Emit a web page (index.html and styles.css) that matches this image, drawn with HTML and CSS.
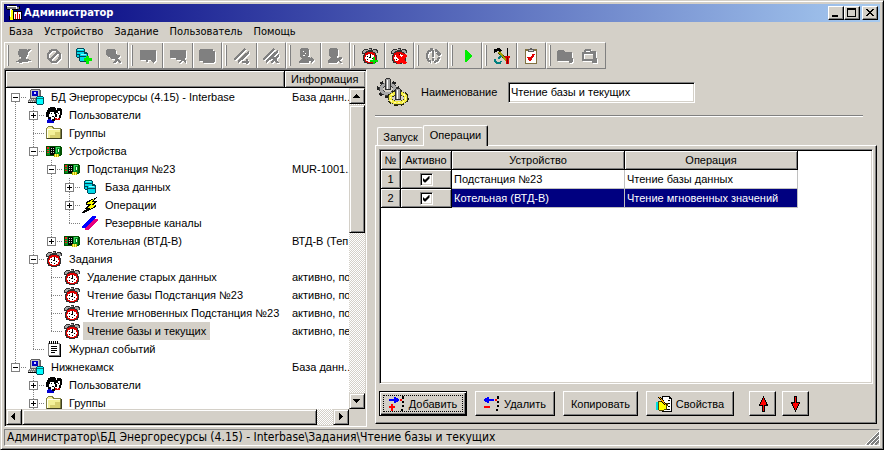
FILE: index.html
```html
<!DOCTYPE html>
<html lang="ru">
<head>
<meta charset="utf-8">
<title>Администратор</title>
<link rel="stylesheet" href="styles.css">
</head>
<body>
<svg class="defs" aria-hidden="true">
  <symbol id="app" viewBox="0 0 16 16">
    <path fill="#fff" d="M1 1h10v4H1z"/><path fill="#808080" d="M1 2h9v2H1zM11 2h2v2h-2z"/><path fill="#000" d="M0 1h1v3H0zM1 4h3v1H1zM6 4h6v1H6zM13 1h1v3h-1zM3 0h7v1H3z"/>
    <path fill="#ff0" d="M4 5h3v10H4z"/><path fill="#fff" d="M4 5h1v7H4z"/><path fill="#000" d="M7 6h9v9H7zM3 11h1v4H3z"/><path fill="#fff" d="M8 7h7v7H8z"/><path fill="#c00" d="M9 9h1v5H9zM11 7h1v7h-1zM13 9h1v5h-1z"/>
  </symbol>
  <symbol id="pc" viewBox="0 0 16 16">
    <path fill="#606060" d="M3 0h9v1h1v8h1v1H2V1h1z"/><path fill="#c8c8c8" d="M3 1h8v8H3z"/><path fill="#808080" d="M11 1h1v8h-1z"/><path fill="#0000c0" d="M4 2h6v5H4z"/><path fill="#d0d0ff" d="M6 3h2v2H6z"/>
    <path fill="#808080" d="M1 10h9v1H1zM0 11h10v2H0z"/><path fill="#e0e0e0" d="M2 10h1v1H2zM4 10h1v1H4zM6 10h1v1H6zM1 12h1v1H1zM3 12h1v1H3zM5 12h1v1H5z"/><path fill="#000" d="M0 13h9v1H0z"/>
    <path fill="#005060" d="M9 7h6v1h1v7h-1v1H9v-1H8V8h1z"/><path fill="#0ff" d="M9 8h6v1H9zM9 10h6v5H9z"/><path fill="#008080" d="M9 9h6v1H9z"/>
  </symbol>
  <symbol id="users" viewBox="0 0 16 16">
    <path fill="#000" d="M4 0h5v1h1v2h1V1h4v1h1v6h-1v3h-2v-1H9v4H6v-2H2v-2H0V5h1V3h1V1h2z"/>
    <path fill="#fff" d="M4 5h4v2h1v3H8v2H5v-2H3V7h1zM12 4h2v4h-1v2h-2V7h-1V6h2z"/>
    <path fill="#000" d="M5 6h1v1H5zM6 9h2v1H6zM12 6h1v1h-1z"/><path fill="#0000d0" d="M2 12h3v1h1v1h2v2H1v-3h1z"/><path fill="#d00000" d="M9 11h2v1h1v-1h2v2H9z"/>
  </symbol>
  <symbol id="folder" viewBox="0 0 16 16">
    <path fill="#808040" d="M2 1h5v1h1v1h7v1h1v10H0V3h1V2h1z"/><path fill="#f4f098" d="M2 2h4v1h1v1h7v9H1V3h1z"/><path fill="#fffff0" d="M1 4h13v1H2v8H1z"/><path fill="#d8d070" d="M4 10h10v3H4zM9 7h5v3H9z"/><path fill="#404020" d="M15 4h1v10H1v-1h14z"/>
  </symbol>
  <symbol id="board" viewBox="0 0 16 16">
    <path fill="#005000" d="M0 3h15v1h1v8h-1v1H0z"/><path fill="#008c20" d="M1 4h13v8H1z"/><path fill="#f02020" d="M1 4h2v2H1zM1 7h2v1H1zM1 9h2v1H1z"/><path fill="#000" d="M4 4h5v8H4z"/><path fill="#c0d8c0" d="M5 5h1v1H5zM7 5h1v1H7zM5 7h1v1H5zM7 7h1v1H7zM5 9h1v1H5zM7 9h1v1H7z"/><path fill="#40d060" d="M10 4h4v1h-4zM10 5h1v5h-1z"/><path fill="#e8ffe8" d="M12 6h1v3h-1z"/><path fill="#c0b000" d="M8 11h5v3H8z"/><path fill="#ffff60" d="M9 11h1v3H9zM11 11h1v3h-1z"/>
  </symbol>
  <symbol id="db" viewBox="0 0 16 16">
    <path fill="#004858" d="M3 1h7v1h1v3h2v1h1v8h-1v1H6v-1H5v-3H3v-1H2V2h1z"/><path fill="#00d8e8" d="M3 2h7v2H3zM3 5h7v2H3zM3 8h2v2H3zM6 7h7v2H6zM6 10h7v4H6z"/><path fill="#80ffff" d="M4 2h5v1H4zM7 7h5v1H7z"/>
  </symbol>
  <symbol id="bolt" viewBox="0 0 16 16">
    <path fill="#000" d="M15 0L4 5v3h3l-4 3v1h2L0 15v1h2l12-6V8h-3l4-3V4h-4l4-3z"/><path fill="#ff0" d="M12 2L5 6v1h5l-5 4h4l-4 3 8-5V8H9l4-3H9z"/>
  </symbol>
  <symbol id="lines" viewBox="0 0 16 16">
    <path fill="#00f" d="M10 1h4v1L3 13H0v-2z"/><path fill="#e6007e" d="M13 4h3v2L6 15H3v-2z"/>
  </symbol>
  <symbol id="clock" viewBox="0 0 16 16">
    <path fill="#303030" d="M2 1h4v1h1V0h3v2h1V1h4v1h1v3h-2v2h1v6h-1v2h-3v1H5v-1H2v-2H1V7h1V6H0V3h1V2h1z"/>
    <path fill="#a8a8a8" d="M2 2h4v1H4v1H3v1H1V3h1zM11 2h3v1h1v2h-2V4h-2zM7 1h2v1H7z"/>
    <path fill="#e00000" d="M5 4h6v1h2v3h1v4h-1v2h-2v1H5v-1H3v-2H2V8h1V5h2z"/><path fill="#fff" d="M6 6h4v1h2v2h1v2h-1v2h-2v1H6v-1H4v-2H3V9h1V7h2z"/><path fill="#000" d="M8 6h1v4H7V9h1zM5 8h1v1H5zM10 10h1v1h-1zM5 11h1v1H5zM8 12h1v1H8z"/>
  </symbol>
  <symbol id="note" viewBox="0 0 16 16">
    <path fill="#808080" d="M2 2h12v13H2z"/><path fill="#fff" d="M3 3h10v11H3z"/><path fill="#000" d="M3 0h1v3H3zM5 0h1v3H5zM7 0h1v3H7zM9 0h1v3H9zM11 0h1v3h-1zM5 5h6v1H5zM5 7h6v1H5zM5 9h6v1H5zM5 11h4v1H5zM14 3h1v12h-1zM3 15h12v1H3z"/>
  </symbol>
  <symbol id="plug" viewBox="0 0 16 16"><path d="M3 1h8v1h1V1h3v1h-1v1h-1v1h-1v3h-1v2h-1v2h3v1h2v1h-3v1H6v1H3v-1H0v-1h2v-1h1v-1h2V9H3V7H2V3h1z"/></symbol>
  <symbol id="ban" viewBox="0 0 16 16"><path fill="none" stroke="currentColor" stroke-width="2.2" d="M8 2a6 6 0 1 0 .01 0M4 12l8-8"/></symbol>
  <symbol id="dbx" viewBox="0 0 16 16"><path d="M2 1h8l1 2v3l2 1h2v1l-2 2v1l3 3v1h-2l-2-2-2 2H8v-1l2-2-1-1H6L5 9H3L1 7V2z"/></symbol>
  <symbol id="dbadd" viewBox="0 0 16 16"><use href="#db" x="-2" y="-1"/><path fill="#0e0" d="M10 8h3v2h3v3h-3v3h-3v-3H8v-3h2z"/></symbol>
  <symbol id="brd" viewBox="0 0 16 16"><path d="M0 2h17v9l-3 4h-1l-2-3H8v2H6v-2H0z"/></symbol>
  <symbol id="brdx" viewBox="0 0 16 16"><path d="M0 2h16v7l-2 2 3 3v1h-2l-2-2-3 2H9v-1l2-2H6v-2H0z"/></symbol>
  <symbol id="brds" viewBox="0 0 16 16"><path d="M1 1h13v2h3v9l-3 3H4v-2H0V2h1z"/></symbol>
  <symbol id="hatch" viewBox="0 0 16 16"><path fill="none" stroke="currentColor" stroke-width="2.500" d="M0 12L11 1M4 14L15 4M8 14h7M13 11v5"/></symbol>
  <symbol id="hatchx" viewBox="0 0 16 16"><path fill="none" stroke="currentColor" stroke-width="2.500" d="M0 12L11 1M3 14L15 3M8 15l8-8M9 8l6 7"/></symbol>
  <symbol id="man" viewBox="0 0 16 16"><path fill-rule="evenodd" d="M3 0h6l2 2v5l-2 2h2l2 1v-1l3 3-3 3v-2h-2v2H1v-2l3-2-2-3V2zM5 3h1v1H5zM7 5h1v1H7zM5 7h2v1H5z"/></symbol>
  <symbol id="manx" viewBox="0 0 16 16"><path d="M3 0h6l2 2v5l-2 2 2 1 2-1h2v1l-2 2 2 3h-2l-2-2-1 2H1v-3l3-2-2-3V2z"/></symbol>
  <symbol id="clockadd" viewBox="0 0 16 16"><use href="#clock"/><path fill="#0d0" d="M11 9h2v3h3v2h-3v3h-2v-3H8v-2h3z"/></symbol>
  <symbol id="clockdel" viewBox="0 0 16 16"><use href="#clock"/><path fill="none" stroke="#f00" stroke-width="3" d="M6 7l9 9M15 7l-9 9"/></symbol>
  <symbol id="sync" viewBox="0 0 16 16"><path fill="none" stroke="currentColor" stroke-width="2.2" d="M6 2a6.500 6.500 0 0 0 0 12M9 14a6 6 0 0 0 5-5M10 2a6 6 0 0 1 4 4M8 2v7"/><path d="M7 10h2v3H7zM10 5h7l-3 3zM5 0h3v5z"/></symbol>
  <symbol id="play" viewBox="0 0 16 16"><path fill="#0e0" d="M6 2h1l6 6-6 6H6z"/></symbol>
  <symbol id="tools" viewBox="0 0 16 16">
    <path fill="#000" d="M0 1l5-1 3 2-2 3-2-2-4 2zM13 0h1v9h-1z"/><path fill="none" stroke="#404000" stroke-width="3" d="M5 4l9 10"/><path fill="none" stroke="#a0a000" stroke-width="2" d="M5 4l9 10"/><path fill="none" stroke="#008080" stroke-width="2" d="M7 8l-3 3M1 11v2l2 2h3l1-2"/><path fill="#e00000" d="M11 8h5v2h-1v6h-3v-6h-1z"/><path fill="#800000" d="M13 9h1v7h-1z"/>
  </symbol>
  <symbol id="clip" viewBox="0 0 16 16">
    <path fill="#807040" d="M2 1h12v15H2z"/><path fill="#fff" d="M3 3h10v12H3z"/><path fill="#606060" d="M5 1h2V0h2v1h2v3H5z"/><path fill="#d0d0d0" d="M6 2h4v1H6z"/><path fill="none" stroke="#e00000" stroke-width="2" d="M5 9l2 3 4-6"/>
  </symbol>
  <symbol id="fold1" viewBox="0 0 16 16"><path d="M1 2h5l2 2h7v6l2 2-3 3h-2v-2H0V3z"/></symbol>
  <symbol id="fold2" viewBox="0 0 16 16"><path fill-rule="evenodd" d="M4 1h6v2h5v7h1v5h-5v-2H1V4h2V2h1zM5 3v1h4V3zM3 6v5h9V6z"/></symbol>
  <symbol id="addop" viewBox="0 0 16 16"><path fill="#00f" d="M0 3h5V1h2v1h2v1h1v2H9v1H7v1H5V5H0z"/><path fill="#f00" d="M11 3h2v2h-2zM2 8h2v2h2v2H4v3H2v-3H0v-2h2z"/><path fill="#000" d="M13 0h2v3h-2zM13 5h2v2h-2zM13 9h2v2h-2zM12 13h2v2h-2z"/></symbol>
  <symbol id="delop" viewBox="0 0 16 16"><path fill="#00f" d="M10 3H5V1H3v1H1v1H0v2h1v1h2v1h2V5h5z"/><path fill="#f00" d="M11 3h2v2h-2zM0 10h6v2H0z"/><path fill="#000" d="M13 0h2v3h-2zM13 5h2v2h-2zM13 9h2v2h-2zM12 13h2v2h-2z"/></symbol>
  <symbol id="props" viewBox="0 0 16 16">
    <path fill="#000" d="M6 0h8v1h1v1h1v14H6z"/><path fill="#fff" d="M7 1h6v2h2v12H7z"/><path fill="#000" d="M12 4h2v1h-2zM12 7h2v1h-2zM12 10h2v1h-2zM10 13h4v1h-4z"/><path fill="#504800" d="M2 5h4v1h2v1h4v3h-1v4H8v1H3v-1H2z"/><path fill="#ff0" d="M3 6h3v1h2v1h3v1h-1v4H8v1H3z"/><path fill="#0dd" d="M0 6h2v8H0z"/><path fill="none" stroke="#000" stroke-width="2.200" d="M3 1l7 8"/><path fill="none" stroke="#fa0" d="M3 1l7 8"/>
  </symbol>
  <symbol id="up" viewBox="0 0 16 16"><path fill="#000" d="M8 0h1v2h1v2h1v2h1v2h1v2h-3v6H7v-6H4V8h1V6h1V4h1V2h1z"/><path fill="#f00" d="M8 2h1v2h1v2h1v3H9v6H8V9H5V8h1V6h1V4h1z"/></symbol>
  <symbol id="gears" viewBox="0 0 32 28">
    <g fill="none"><ellipse cx="11" cy="11" rx="9" ry="7" stroke="#202020" stroke-width="4" stroke-dasharray="3 3"/><ellipse cx="11" cy="11" rx="7" ry="5" stroke="#404040" stroke-width="4"/><ellipse cx="11" cy="11" rx="7" ry="5" stroke="#a8a8a8" stroke-width="3"/></g>
    <path fill="#303030" d="M8 1h1V0h4v1h1v11H8z"/><path fill="#a0a0a0" d="M9 1h4v10H9z"/><path fill="#fff" d="M10 2h1v9h-1z"/>
    <g fill="none"><ellipse cx="21" cy="20" rx="9" ry="6" stroke="#202000" stroke-width="4" stroke-dasharray="3 3"/><ellipse cx="21" cy="20" rx="8" ry="5" stroke="#404020" stroke-width="4"/><ellipse cx="21" cy="20" rx="8" ry="5" stroke="#f4ec40" stroke-width="3"/><ellipse cx="21" cy="20" rx="8" ry="5" stroke="#fffcb0" stroke-dasharray="2 2"/></g>
    <path fill="#303030" d="M18 11h1v-1h4v1h1v11h-6z"/><path fill="#a0a0a0" d="M19 11h4v10h-4z"/><path fill="#fff" d="M20 12h1v9h-1z"/>
  </symbol>
</svg>
<div class="window">
  <header class="titlebar">
    <svg class="icon"><use href="#app"/></svg>
    <h1>Администратор</h1>
    <div class="caption-buttons">
      <button class="cap" aria-label="Свернуть"><svg viewBox="0 0 12 10"><path d="M2 7h6v2H2z"/></svg></button>
      <button class="cap" aria-label="Развернуть"><svg viewBox="0 0 12 10"><path fill-rule="evenodd" d="M1 0h9v9H1zM2 2v6h7V2z"/></svg></button>
      <button class="cap close" aria-label="Закрыть"><svg viewBox="0 0 12 10"><path d="M2 1h2v1h1v1h2V2h1V1h2v1H9v1H8v1H7v1h1v1h1v1h1v1H8V7H7V6H5v1H4v1H2V7h1V6h1V5h1V4H4V3H3V2H2z"/></svg></button>
    </div>
  </header>
  <nav class="menu"><a href="#">База</a><a href="#">Устройство</a><a href="#">Задание</a><a href="#">Пользователь</a><a href="#">Помощь</a></nav>
  <div class="toolbar" role="toolbar">
    <div class="band">
      <button disabled aria-label="Подключить"><svg class="icon"><use href="#plug"/></svg></button><button disabled aria-label="Отключить"><svg class="icon"><use href="#ban"/></svg></button><button aria-label="Добавить базу"><svg class="icon"><use href="#dbadd"/></svg></button><button disabled aria-label="Удалить базу"><svg class="icon"><use href="#dbx"/></svg></button>
    </div>
    <div class="band">
      <button disabled aria-label="Добавить устройство"><svg class="icon"><use href="#brd"/></svg></button><button disabled aria-label="Удалить устройство"><svg class="icon"><use href="#brdx"/></svg></button><button disabled aria-label="Копировать устройство"><svg class="icon"><use href="#brds"/></svg></button>
    </div>
    <div class="band">
      <button disabled aria-label="Добавить канал"><svg class="icon"><use href="#hatch"/></svg></button><button disabled aria-label="Удалить канал"><svg class="icon"><use href="#hatchx"/></svg></button>
    </div>
    <div class="band">
      <button disabled aria-label="Добавить пользователя"><svg class="icon"><use href="#man"/></svg></button><button disabled aria-label="Удалить пользователя"><svg class="icon"><use href="#manx"/></svg></button>
    </div>
    <div class="band">
      <button aria-label="Добавить задание"><svg class="icon"><use href="#clockadd"/></svg></button><button aria-label="Удалить задание"><svg class="icon"><use href="#clockdel"/></svg></button>
    </div>
    <div class="band"><button disabled aria-label="Обновить"><svg class="icon"><use href="#sync"/></svg></button></div>
    <div class="band"><button aria-label="Запустить"><svg class="icon"><use href="#play"/></svg></button></div>
    <div class="band">
      <button aria-label="Настройки"><svg class="icon"><use href="#tools"/></svg></button><button aria-label="Проверка"><svg class="icon"><use href="#clip"/></svg></button>
    </div>
    <div class="band tight">
      <button disabled aria-label="Загрузить"><svg class="icon"><use href="#fold1"/></svg></button><button disabled aria-label="Открыть"><svg class="icon"><use href="#fold2"/></svg></button>
    </div>
  </div>
  <main class="main">
    <section class="tree">
      <div class="tree-head"><span></span><span>Информация</span></div>
      <div class="rows" role="tree">
        <div class="row"><i class="own first"><b></b></i><svg class="icon"><use href="#pc"/></svg><span class="name">БД Энергоресурсы (4.15) - Interbase</span><span class="info">База данн..</span></div>
        <div class="row"><i class="v"></i><i class="own"><b class="plus"></b></i><svg class="icon"><use href="#users"/></svg><span class="name">Пользователи</span></div>
        <div class="row"><i class="v"></i><i class="own"></i><svg class="icon"><use href="#folder"/></svg><span class="name">Группы</span></div>
        <div class="row"><i class="v"></i><i class="own"><b></b></i><svg class="icon"><use href="#board"/></svg><span class="name">Устройства</span></div>
        <div class="row"><i class="v"></i><i class="v"></i><i class="own"><b></b></i><svg class="icon"><use href="#board"/></svg><span class="name">Подстанция №23</span><span class="info">MUR-1001..</span></div>
        <div class="row"><i class="v"></i><i class="v"></i><i class="v"></i><i class="own"><b class="plus"></b></i><svg class="icon"><use href="#db"/></svg><span class="name">База данных</span></div>
        <div class="row"><i class="v"></i><i class="v"></i><i class="v"></i><i class="own"><b class="plus"></b></i><svg class="icon"><use href="#bolt"/></svg><span class="name">Операции</span></div>
        <div class="row"><i class="v"></i><i class="v"></i><i class="v"></i><i class="own last"></i><svg class="icon"><use href="#lines"/></svg><span class="name">Резервные каналы</span></div>
        <div class="row"><i class="v"></i><i class="v"></i><i class="own last"><b class="plus"></b></i><svg class="icon"><use href="#board"/></svg><span class="name">Котельная (ВТД-В)</span><span class="info">ВТД-В (Теп</span></div>
        <div class="row"><i class="v"></i><i class="own"><b></b></i><svg class="icon"><use href="#clock"/></svg><span class="name">Задания</span></div>
        <div class="row"><i class="v"></i><i class="v"></i><i class="own"></i><svg class="icon"><use href="#clock"/></svg><span class="name">Удаление старых данных</span><span class="info">активно, по</span></div>
        <div class="row"><i class="v"></i><i class="v"></i><i class="own"></i><svg class="icon"><use href="#clock"/></svg><span class="name">Чтение базы Подстанция №23</span><span class="info">активно, по</span></div>
        <div class="row"><i class="v"></i><i class="v"></i><i class="own"></i><svg class="icon"><use href="#clock"/></svg><span class="name">Чтение мгновенных Подстанция №23</span><span class="info">активно, по</span></div>
        <div class="row"><i class="v"></i><i class="v"></i><i class="own last"></i><svg class="icon"><use href="#clock"/></svg><span class="name selected">Чтение базы и текущих</span><span class="info">активно, пе</span></div>
        <div class="row"><i class="v"></i><i class="own last"></i><svg class="icon"><use href="#note"/></svg><span class="name">Журнал событий</span></div>
        <div class="row"><i class="own last"><b></b></i><svg class="icon"><use href="#pc"/></svg><span class="name">Нижнекамск</span><span class="info">База данн..</span></div>
        <div class="row"><i></i><i class="own"><b class="plus"></b></i><svg class="icon"><use href="#users"/></svg><span class="name">Пользователи</span></div>
        <div class="row"><i></i><i class="own"><b class="plus"></b></i><svg class="icon"><use href="#folder"/></svg><span class="name">Группы</span></div>
      </div>
      <div class="scroll vertical">
        <button class="arrow" aria-label="Вверх"><svg viewBox="0 0 12 12"><path d="M5 4h1v1h1v1h1v1h1v1H2V7h1V6h1V5h1z"/></svg></button>
        <div class="thumb"></div>
        <button class="arrow" aria-label="Вниз"><svg viewBox="0 0 12 12"><path d="M2 4h7v1H8v1H7v1H6v1H5V7H4V6H3V5H2z"/></svg></button>
      </div>
      <div class="scroll horizontal">
        <button class="arrow" aria-label="Влево"><svg viewBox="0 0 12 12"><path d="M7 2v7H6V8H5V7H4V6H3V5h1V4h1V3h1V2z"/></svg></button>
        <div class="thumb"></div>
        <button class="arrow" aria-label="Вправо"><svg viewBox="0 0 12 12"><path d="M4 2v7h1V8h1V7h1V6h1V5H7V4H6V3H5V2z"/></svg></button>
      </div>
    </section>
    <section class="detail">
      <div class="form">
        <svg class="gears"><use href="#gears"/></svg>
        <label for="name">Наименование</label>
        <input id="name" type="text" value="Чтение базы и текущих">
      </div>
      <hr>
      <div class="tabs" role="tablist"><button role="tab">Запуск</button><button role="tab" class="active" aria-selected="true">Операции</button></div>
      <div class="page">
        <div class="list">
          <table>
            <colgroup><col class="c1"><col class="c2"><col class="c3"><col class="c3"></colgroup>
            <thead><tr><th>№</th><th>Активно</th><th>Устройство</th><th>Операция</th></tr></thead>
            <tbody>
              <tr><th>1</th><th><input type="checkbox" checked aria-label="Активно"></th><td>Подстанция №23</td><td>Чтение базы данных</td></tr>
              <tr class="current"><th>2</th><th><input type="checkbox" checked aria-label="Активно"></th><td>Котельная (ВТД-В)</td><td>Чтение мгновенных значений</td></tr>
            </tbody>
          </table>
        </div>
        <div class="actions">
          <button class="act wide default"><svg class="icon"><use href="#addop"/></svg>Добавить</button>
          <button class="act mid"><svg class="icon"><use href="#delop"/></svg>Удалить</button>
          <button class="act plain">Копировать</button>
          <button class="act wide"><svg class="icon"><use href="#props"/></svg>Свойства</button>
          <div class="order">
            <button class="act" aria-label="Выше"><svg class="icon"><use href="#up"/></svg></button>
            <button class="act" aria-label="Ниже"><svg class="icon flip"><use href="#up"/></svg></button>
          </div>
        </div>
      </div>
    </section>
  </main>
  <footer class="status"><span>Администратор\БД Энергоресурсы (4.15) - Interbase\Задания\Чтение базы и текущих</span>
    <svg class="grip" viewBox="0 0 14 14"><path stroke="#fff" d="M0 14L14 0M4 14L14 4M8 14l6-6"/><path stroke="#808080" stroke-width="2" d="M2 14L14 2M6 14l8-8M10 14l4-4"/></svg>
  </footer>
</div>
</body>
</html>
```
FILE: styles.css
```css
:root {
  --face: #d4d0c8;
  --shadow: #808080;
  --navy: #000080;
  --ui: "DejaVu Sans Condensed", "DejaVu Sans", sans-serif;
}
* { box-sizing: border-box; }
body { margin: 0; font: 11px/18px "Liberation Sans", sans-serif; color: #000; }
button, input { font: inherit; color: inherit; padding: 0; margin: 0; border-radius: 0; }
svg { display: block; shape-rendering: crispEdges; }
.defs { position: absolute; width: 0; height: 0; }
.icon { width: 16px; height: 16px; flex: none; overflow: visible; }

.window {
  display: flex; flex-direction: column; height: 100vh; padding: 3px;
  background: var(--face);
  border: 1px solid; border-color: var(--face) #000 #000 var(--face);
  box-shadow: inset 1px 1px #fff, inset -1px -1px var(--shadow);
}
.titlebar {
  display: flex; align-items: center; flex: none; height: 18px; padding: 0 2px;
  background: linear-gradient(90deg, #000080, #a6caf0);
}
.titlebar h1 { margin: 0 auto 0 2px; font: bold 11px/18px var(--ui); color: #fff; }
.caption-buttons { display: flex; }
.cap {
  width: 16px; height: 14px; background: var(--face);
  border: 1px solid; border-color: #fff #000 #000 #fff;
  box-shadow: inset -1px -1px var(--shadow);
}
.cap svg { width: 12px; height: 10px; margin-left: 1px; }
.cap.close { margin-left: 2px; }

.menu { display: flex; gap: 11px; flex: none; height: 20px; padding: 0 5px; font: 11px/20px var(--ui); }
.menu a { color: #000; text-decoration: none; }

.toolbar { display: flex; flex: none; height: 27px; }
.band {
  position: relative; display: flex; padding-left: 4px;
  border: 1px solid; border-color: #fff var(--shadow) var(--shadow) #fff;
}
.band::before {
  content: ""; position: absolute; left: 2px; top: 2px; bottom: 2px; width: 2px;
  background: linear-gradient(90deg, #fff 50%, var(--shadow) 50%);
}
.band button {
  display: grid; place-items: center; width: 30px; background: none;
  border: 0; border-right: 1px solid var(--shadow); box-shadow: 1px 0 #fff; color: var(--shadow);
}
.band button:last-child { border: 0; box-shadow: none; width: 28px; }
.band .icon { fill: currentColor; }
.band button:disabled .icon { filter: drop-shadow(1px 1px 0 #fff); }
.band.tight { padding: 0 4px 0 6px; }
.band.tight button { width: 24px; border: 0; box-shadow: none; }

.main { display: flex; flex: 1; min-height: 0; }
.tree {
  display: grid; flex: none; width: 363px; margin-bottom: 2px;
  grid-template: 17px minmax(0, 1fr) 16px / minmax(0, 1fr) 16px;
  border: 1px solid; border-color: var(--shadow) #fff #fff var(--shadow);
  box-shadow: inset 1px 1px #000, inset -1px -1px var(--face);
  padding: 1px; background: #fff;
}
.tree-head { grid-column: 1 / -1; display: flex; line-height: 16px; background: var(--face); border-bottom: 1px solid #000; }
.tree-head span { flex: 1; box-shadow: inset 1px 1px #fff, inset -1px -1px var(--shadow); }
.tree-head span:last-child { flex: none; width: 81px; padding-left: 6px; border-left: 1px solid #000; }
.rows { overflow: hidden; }
.row { position: relative; display: flex; align-items: center; height: 18px; white-space: nowrap; }
.row i { position: relative; flex: none; width: 18px; height: 18px; }
.row .v, .row .own::before {
  background: repeating-linear-gradient(var(--shadow) 0 1px, transparent 1px 2px) 9px 0 / 1px 100% no-repeat;
}
.row .own { width: 22px; }
.row .own::before { content: ""; position: absolute; inset: 0; }
.row .own.last::before { bottom: 9px; }
.row .own.first::before { top: 10px; }
.row .own::after {
  content: ""; position: absolute; left: 9px; right: 2px; top: 9px; height: 1px;
  background: repeating-linear-gradient(90deg, var(--shadow) 0 1px, transparent 1px 2px);
}
.row b {
  position: absolute; z-index: 1; left: 5px; top: 5px; width: 9px; height: 9px;
  border: 1px solid var(--shadow);
  background: linear-gradient(#000, #000) center / 5px 1px no-repeat, #fff;
}
.row b.plus { background: linear-gradient(#000, #000) center / 5px 1px no-repeat, linear-gradient(#000, #000) center / 1px 5px no-repeat, #fff; }
.name { margin-left: 3px; padding: 0 4px; }
.name.selected { background: var(--face); }
.info { position: absolute; left: 286px; }

.scroll { display: flex; background: repeating-conic-gradient(#fff 0 25%, var(--face) 0 50%) 0 0 / 2px 2px; }
.scroll.vertical { flex-direction: column; }
.arrow, .thumb {
  flex: none; width: 16px; height: 16px; background: var(--face);
  border: 1px solid; border-color: var(--face) #000 #000 var(--face);
  box-shadow: inset 1px 1px #fff, inset -1px -1px var(--shadow);
}
.arrow svg { width: 12px; height: 12px; margin: 1px; }
.arrow:last-child { margin-top: auto; }
.vertical .thumb { height: 40%; margin-top: 1px; }
.horizontal .thumb { width: 86%; }
.horizontal .arrow:last-child { margin: 0 0 0 auto; }
.tree::after { content: ""; background: var(--face); }

.detail { display: flex; flex-direction: column; flex: 1; min-width: 0; padding: 0 3px 5px 8px; }
.form { display: flex; align-items: center; height: 46px; }
.gears { width: 32px; height: 28px; margin: 0 12px 0 2px; }
.form label { width: 87px; }
.form input {
  width: 187px; height: 21px; padding: 0 2px; background: #fff; outline: 0;
  border: 1px solid; border-color: var(--shadow) #fff #fff var(--shadow);
  box-shadow: inset 1px 1px #000, inset -1px -1px var(--face);
}
hr { flex: none; height: 2px; width: auto; margin: 0 14px 8px 0; border: 0; border-top: 1px solid var(--shadow); border-bottom: 1px solid #fff; }
.tabs { display: flex; align-items: flex-end; height: 20px; padding-left: 2px; }
.tabs button {
  height: 18px; width: 46px; line-height: 18px; background: var(--face);
  border: 1px solid #fff; border-width: 1px 0 0 1px; border-radius: 2px 2px 0 0;
}
.tabs .active {
  position: relative; height: 21px; width: 65px; margin-bottom: -1px; padding-bottom: 2px;
  border-right: 1px solid #000; box-shadow: inset -1px 0 var(--shadow);
}
.page {
  display: flex; flex-direction: column; flex: 1; min-height: 0; padding: 3px 3px 7px;
  border: 1px solid; border-color: #fff #000 #000 #fff;
  box-shadow: inset -1px -1px var(--shadow);
}
.list {
  flex: 1; min-height: 0; background: #fff; padding: 1px;
  border: 1px solid; border-color: var(--shadow) #fff #fff var(--shadow);
  box-shadow: inset 1px 1px #000, inset -1px -1px var(--face);
}
table { border-spacing: 0; table-layout: fixed; width: 417px; line-height: 18px; }
.c1 { width: 20px; }
.c2 { width: 51px; }
th, td { height: 19px; padding: 0; overflow: hidden; white-space: nowrap; }
th {
  font-weight: normal; text-align: center; background: var(--face);
  border: 1px solid #000; border-width: 0 1px 1px 0;
  box-shadow: inset 1px 1px #fff, inset -1px -1px var(--shadow);
}
td { padding-left: 2px; border: 1px solid #c0c0c0; border-width: 0 1px 1px 0; }
.current td { background: var(--navy); color: #fff; }
th input {
  display: block; position: relative; appearance: none; width: 13px; height: 13px; margin: 0 auto;
  background: #fff; border: 1px solid; border-color: var(--shadow) #fff #fff var(--shadow);
  box-shadow: inset 1px 1px #000, inset -1px -1px var(--face);
}
th input:checked::before {
  content: ""; position: absolute; left: 2px; top: 2px; width: 7px; height: 7px; background: #000;
  clip-path: polygon(0 2px, 2px 4px, 3px 4px, 7px 0, 7px 3px, 3px 7px, 2px 7px, 0 5px);
}
.actions { display: flex; gap: 8px; padding-top: 7px; }
.act {
  position: relative; display: flex; align-items: center; justify-content: center; gap: 4px;
  width: 27px; height: 25px; background: var(--face);
  border: 1px solid; border-color: #fff #000 #000 #fff;
  box-shadow: inset -1px -1px var(--shadow);
}
.act.wide { width: 88px; }
.act.mid { width: 80px; }
.act.plain { width: 75px; }
.act.default { border-color: #000; box-shadow: inset 1px 1px #fff, inset -1px -1px #000, inset -2px -2px var(--shadow); }
.act.default::after { content: ""; position: absolute; inset: 3px; border: 1px dotted #000; }
.order { display: flex; gap: 6px; margin-left: 7px; }
.flip { transform: rotate(180deg); }

.status {
  display: flex; align-items: center; flex: none; height: 17px; padding-left: 2px;
  font: 12px/15px var(--ui);
  border: 1px solid; border-color: var(--shadow) #fff #fff var(--shadow);
}
.status span { flex: 1; white-space: nowrap; overflow: hidden; }
.grip { width: 14px; height: 14px; }
```
